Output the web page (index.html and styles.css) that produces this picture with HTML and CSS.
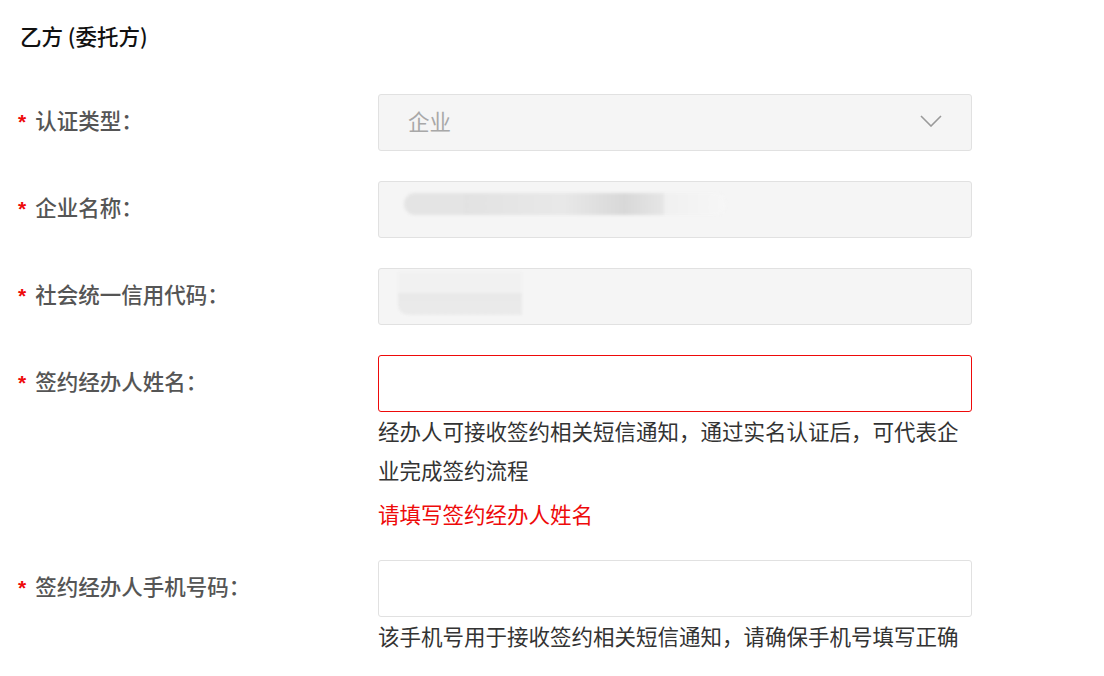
FILE: index.html
```html
<!DOCTYPE html>
<html lang="zh-CN">
<head>
<meta charset="utf-8">
<title>乙方 (委托方)</title>
<link rel="stylesheet" href="styles.css">
</head>
<body>
<div class="page">
  <h2 class="title">乙方 (委托方)</h2>

  <div class="row">
    <div class="label"><span class="star">*</span>认证类型：</div>
    <div class="control">
      <div class="field disabled select">
        <span class="placeholder">企业</span>
        <svg class="chev" width="22" height="12" viewBox="0 0 22 12"><path d="M1 1 L11 11 L21 1" fill="none" stroke="#9a9a9a" stroke-width="1.6"/></svg>
      </div>
    </div>
  </div>

  <div class="row">
    <div class="label"><span class="star">*</span>企业名称：</div>
    <div class="control">
      <div class="field disabled">
        <div class="mask mask-name">
          <span class="m1"></span><span class="m2"></span><span class="m3"></span>
        </div>
      </div>
    </div>
  </div>

  <div class="row">
    <div class="label"><span class="star">*</span>社会统一信用代码：</div>
    <div class="control">
      <div class="field disabled">
        <div class="mask mask-code"></div>
      </div>
    </div>
  </div>

  <div class="row row-err">
    <div class="label"><span class="star">*</span>签约经办人姓名：</div>
    <div class="control">
      <div class="field error"></div>
      <p class="help">经办人可接收签约相关短信通知，通过实名认证后，可代表企业完成签约流程</p>
      <p class="err">请填写签约经办人姓名</p>
    </div>
  </div>

  <div class="row">
    <div class="label"><span class="star">*</span>签约经办人手机号码：</div>
    <div class="control">
      <div class="field"></div>
      <p class="help">该手机号用于接收签约相关短信通知，请确保手机号填写正确</p>
    </div>
  </div>
</div>
</body>
</html>
```
FILE: styles.css
```css
html, body {
  margin: 0;
  padding: 0;
  background: #ffffff;
}
body {
  font-family: "Noto Sans CJK SC", "Noto Sans", sans-serif;
  font-size: 21.5px;
  color: #333;
}
.page {
  padding: 21px 0 0 18px;
}
.title {
  margin: 0 0 43px 2px;
  font-size: 21.5px;
  line-height: 30px;
  font-weight: 500;
  color: #111;
}
.row {
  display: flex;
  margin-bottom: 30px;
}
.row-err {
  margin-bottom: 27px;
}
.label {
  box-sizing: border-box;
  width: 360px;
  height: 57px;
  padding-bottom: 6px;
  display: flex;
  align-items: center;
  font-weight: 500;
  color: #555;
  white-space: pre;
}
.star {
  color: #ee0a0a;
  font-weight: 700;
  font-family: "Liberation Sans", sans-serif;
  font-size: 21px;
  margin-top: 4px;
  margin-right: 9px;
}
.control {
  width: 594px;
}
.field {
  box-sizing: border-box;
  height: 57px;
  border: 1px solid #e1e1e1;
  border-radius: 3px;
  background: #fff;
  display: flex;
  align-items: center;
  padding: 0 29px;
}
.field.disabled {
  background: #f5f5f5;
}
.field.error {
  border-color: #ee0a0a;
}
.select {
  justify-content: space-between;
}
.placeholder {
  color: #a8a8a8;
  margin-top: -4px;
}
.chev {
  display: block;
  margin-top: -4px;
}
.mask {
  filter: blur(1.5px);
}
.mask-name {
  display: flex;
  margin-left: -4px;
  margin-top: -12px;
  height: 22px;
}
.mask-name .m1 {
  width: 60px;
  background: #e4e4e4;
  border-radius: 11px 0 0 11px;
}
.mask-name .m2 {
  width: 200px;
  background: linear-gradient(90deg, #e2e2e2, #e8e8e8 50%, #d8d8d8 80%, #e6e6e6);
}
.mask-name .m3 {
  width: 62px;
  background: linear-gradient(90deg, #f0f0f0, #f6f6f6);
  border-radius: 0 11px 11px 0;
}
.mask-code {
  width: 124px;
  height: 43px;
  margin-left: -10px;
  margin-top: -6px;
  background: linear-gradient(180deg, #f1f1f1 0, #f1f1f1 48%, #e9e9e9 50%, #ebebeb 100%);
  border-radius: 0 0 0 10px;
  filter: blur(0.8px);
}
.help {
  margin: -1px 0 0;
  line-height: 39px;
  color: #333;
}
.err {
  margin: 6px 0 0;
  line-height: 38px;
  color: #ee0a0a;
}
```
